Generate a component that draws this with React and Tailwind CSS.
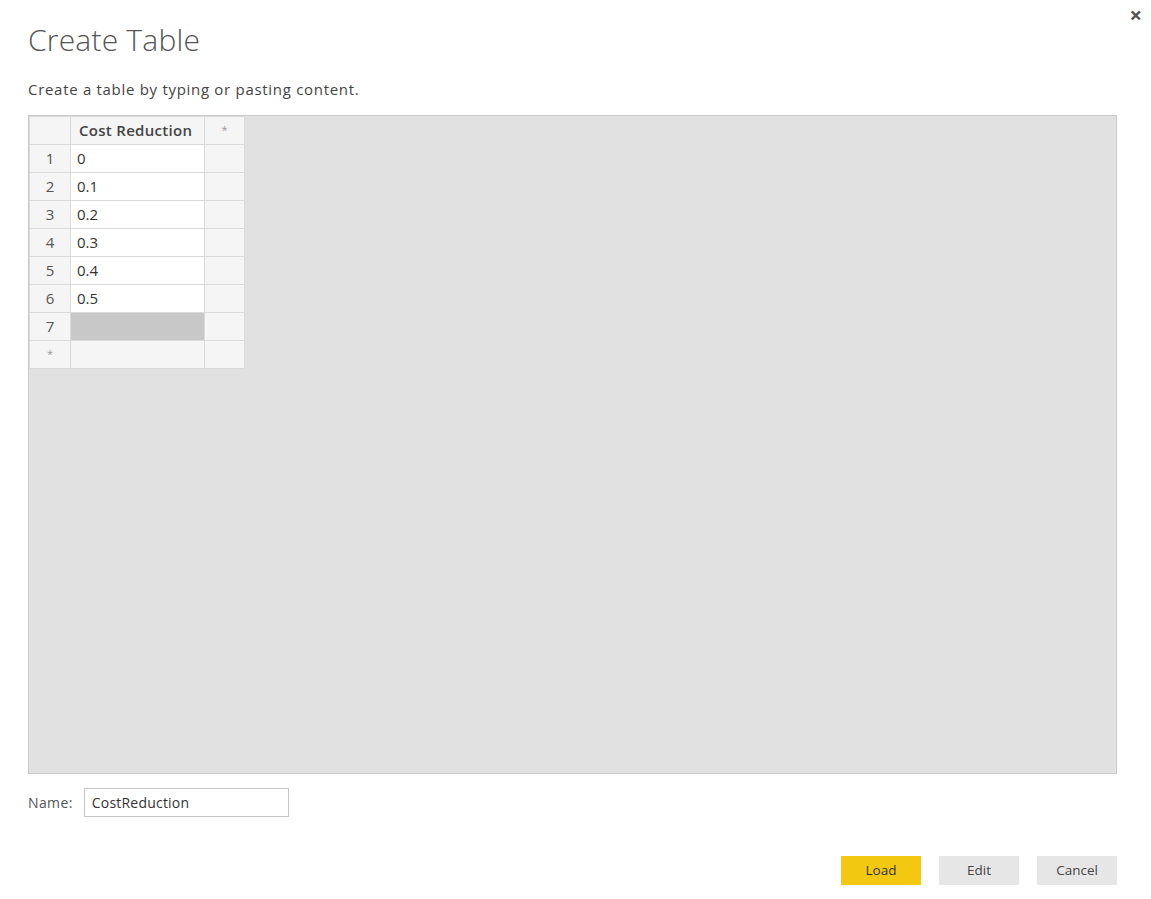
import React from 'react';

const rows = ['0', '0.1', '0.2', '0.3', '0.4', '0.5'];

const font = { fontFamily: '"Open Sans", "Noto Sans", sans-serif' };

const Cell = ({ className = '', children }) => (
  <div className={`h-[28px] border-r border-b border-[#dadada] flex items-center ${className}`}>
    {children}
  </div>
);

export default function App() {
  return (
    <div className="w-[1151px] h-[899px] bg-white relative text-[#444]" style={font}>
      <button className="absolute right-[9px] top-[3px] text-[22px] text-[#555] leading-none font-bold">
        ×
      </button>
      <div className="pl-[28px] pr-[34px] pt-[20px]">
        <h1 className="text-[30px] font-light text-[#555] leading-[40px] tracking-[0.2px]">Create Table</h1>
        <p className="mt-[19px] text-[15px] leading-[20px] text-[#444] tracking-[0.7px]">Create a table by typing or pasting content.</p>
        <div className="mt-[16px] h-[659px] bg-[#e1e1e1] border border-[#cacaca]">
          <div className="grid grid-cols-[41px_134px_40px] w-fit text-[14px] text-[#333] border-l border-t border-[#dadada] bg-[#f5f5f5]">
            <Cell className="bg-[#f5f5f5]" />
            <Cell className="bg-[#f5f5f5] px-[8px] font-semibold text-[15px] tracking-[0.3px] text-[#444]">Cost Reduction</Cell>
            <Cell className="bg-[#f5f5f5] justify-center text-[11px] text-[#999]">*</Cell>
            {rows.map((v, i) => (
              <React.Fragment key={i}>
                <Cell className="bg-[#f5f5f5] justify-center text-[15px] text-[#555]">{i + 1}</Cell>
                <Cell className="bg-white px-[6px] text-[15px]">{v}</Cell>
                <Cell className="bg-[#f5f5f5]" />
              </React.Fragment>
            ))}
            <Cell className="bg-[#f5f5f5] justify-center text-[15px] text-[#555]">7</Cell>
            <Cell className="bg-[#c8c8c8]" />
            <Cell className="bg-[#f5f5f5]" />
            <Cell className="bg-[#f5f5f5] justify-center text-[11px] text-[#999]">*</Cell>
            <Cell className="bg-[#f5f5f5]" />
            <Cell className="bg-[#f5f5f5]" />
          </div>
        </div>
        <div className="mt-[14px] flex items-center gap-[11px]">
          <span className="text-[14px] text-[#555] tracking-[0.4px]">Name:</span>
          <div className="w-[205px] h-[29px] border border-[#c6c6c6] flex items-center px-[7px] text-[14px] text-[#333] tracking-[0.2px]">
            CostReduction
          </div>
        </div>
        <div className="mt-[39px] flex justify-end gap-[18px] text-[13.5px]">
          <button className="w-[80px] h-[29px] bg-[#f2c811] text-[#333]">Load</button>
          <button className="w-[80px] h-[29px] bg-[#e6e6e6] text-[#444]">Edit</button>
          <button className="w-[80px] h-[29px] bg-[#e6e6e6] text-[#444]">Cancel</button>
        </div>
      </div>
    </div>
  );
}
